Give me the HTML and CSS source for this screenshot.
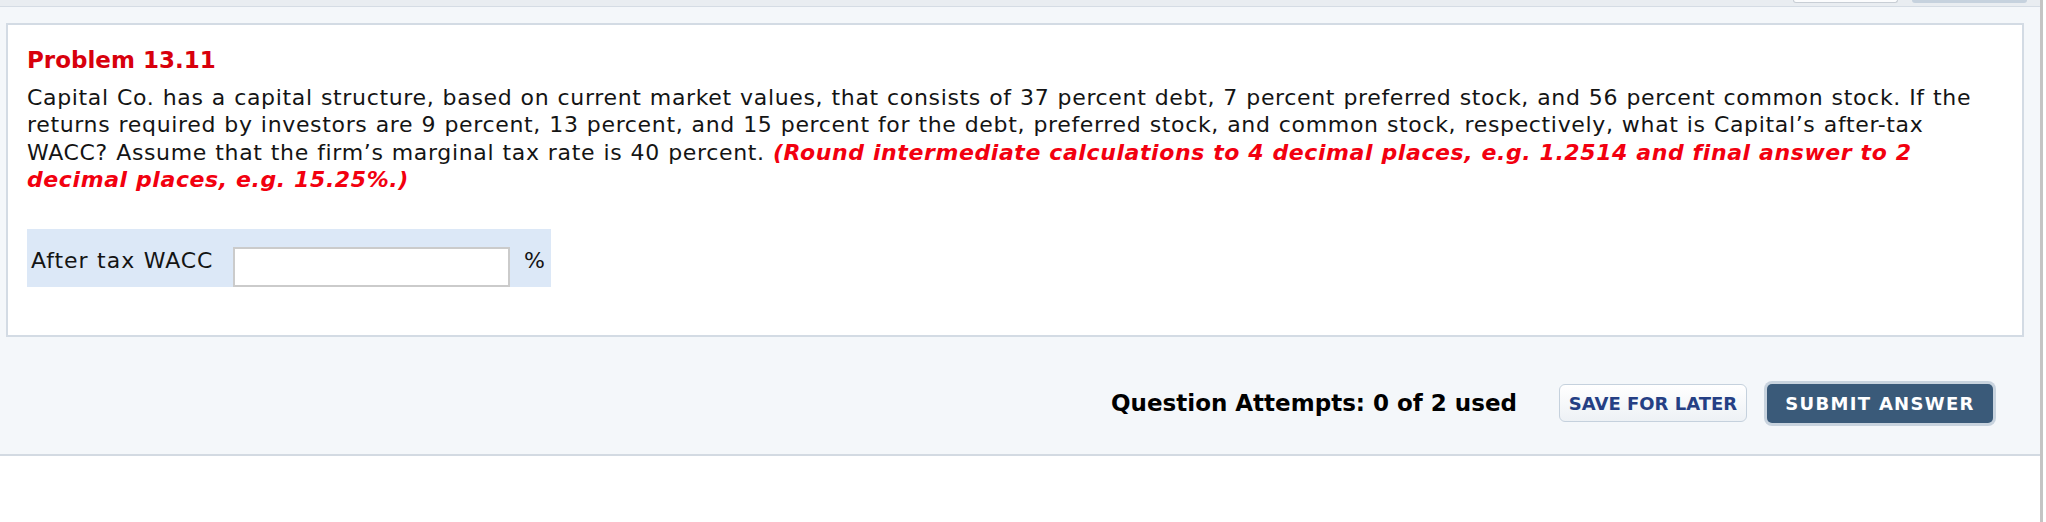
FILE: index.html
```html
<!DOCTYPE html>
<html lang="en">
<head>
<meta charset="utf-8">
<title>Problem 13.11</title>
<link rel="stylesheet" href="styles.css">
</head>
<body>
<div class="frame">
  <div class="topbar">
    <span class="stub stub-light"></span>
    <span class="stub stub-dark"></span>
  </div>
  <div class="panel">
    <div class="card">
      <h2 class="title">Problem 13.11</h2>
      <p class="question">Capital Co. has a capital structure, based on current market values, that consists of 37 percent debt, 7 percent preferred stock, and 56 percent common stock. If the returns required by investors are 9 percent, 13 percent, and 15 percent for the debt, preferred stock, and common stock, respectively, what is Capital’s after-tax WACC? Assume that the firm’s marginal tax rate is 40 percent. <em class="note">(Round intermediate calculations to 4 decimal places, e.g. 1.2514 and final answer to 2 decimal places, e.g. 15.25%.)</em></p>
      <div class="answer-row">
        <label class="answer-label" for="wacc">After tax WACC</label>
        <input class="answer-input" id="wacc" type="text">
        <span class="unit">%</span>
      </div>
    </div>
    <div class="footer">
      <span class="attempts">Question Attempts: 0 of 2 used</span>
      <button class="btn btn-save" type="button">SAVE FOR LATER</button>
      <button class="btn btn-submit" type="button">SUBMIT ANSWER</button>
    </div>
  </div>
</div>
</body>
</html>
```

FILE: styles.css
```css
html, body {
  margin: 0;
  padding: 0;
  background: #ffffff;
}

body {
  width: 2046px;
  font-family: "DejaVu Sans", Verdana, sans-serif;
  color: #141414;
}

.frame {
  width: 2040px;
  min-height: 522px;
  border-right: 3px solid #c4c4c4;
  background: #ffffff;
}

.topbar {
  height: 6px;
  background: #e9edf1;
  border-bottom: 1px solid #d5dce4;
  display: flex;
  justify-content: flex-end;
  align-items: flex-start;
  gap: 14px;
  padding-right: 13px;
}

.stub {
  display: block;
  height: 3px;
  box-sizing: border-box;
  border-radius: 0 0 5px 5px;
}

.stub-light {
  width: 105px;
  background: #fbfcfd;
  border: 1px solid #c8ced5;
  border-top: none;
}

.stub-dark {
  width: 115px;
  background: #c6d2de;
}

.panel {
  background: #f4f7fa;
  padding: 16px 16px 0 6px;
  border-bottom: 2px solid #d3dae2;
}

.card {
  background: #ffffff;
  border: 2px solid #d3dbe4;
  padding: 21px 30px 48px 19px;
}

.title {
  margin: 0;
  font-size: 23px;
  line-height: 28px;
  font-weight: bold;
  color: #d8000c;
}

.question {
  margin: 10px 0 0;
  font-size: 22px;
  line-height: 27.4px;
  letter-spacing: 0.66px;
  word-spacing: 0.6px;
}

.note {
  font-weight: bold;
  font-style: italic;
  color: #f2000f;
  letter-spacing: 0.6px;
  word-spacing: 0;
}

.answer-row {
  margin-top: 35px;
  width: 524px;
  box-sizing: border-box;
  display: flex;
  align-items: flex-start;
  background: #dce8f7;
  padding: 18px 5px 0 4px;
}

.answer-label {
  flex: 0 0 202px;
  font-size: 22px;
  line-height: 27.4px;
  letter-spacing: 0.95px;
  word-spacing: 0.6px;
}

.answer-input {
  width: 277px;
  height: 40px;
  box-sizing: border-box;
  margin: 0;
  border: 2px solid #cbcbcb;
  background: #ffffff;
  font-family: inherit;
  font-size: 20px;
}

.unit {
  margin-left: 14px;
  font-size: 22px;
  line-height: 27.4px;
}

.footer {
  display: flex;
  justify-content: flex-end;
  align-items: center;
  padding: 47px 31px 31px 0;
}

.attempts {
  font-size: 23px;
  font-weight: bold;
  color: #000000;
  margin-right: 42px;
}

.btn {
  font-family: inherit;
  font-weight: bold;
  font-size: 18px;
  box-sizing: border-box;
  margin: 0;
  padding: 0;
  cursor: pointer;
}

.btn-save {
  width: 188px;
  height: 38px;
  border: 1.5px solid #c5d1dd;
  border-radius: 6px;
  background: linear-gradient(#ffffff, #edf1f5);
  color: #253f84;
  margin-right: 20px;
}

.btn-submit {
  width: 226px;
  height: 39px;
  border: none;
  border-radius: 5px;
  background: #3a5a79;
  color: #ffffff;
  letter-spacing: 1.3px;
  box-shadow: 0 0 0 3px #c8d3de;
}
```
